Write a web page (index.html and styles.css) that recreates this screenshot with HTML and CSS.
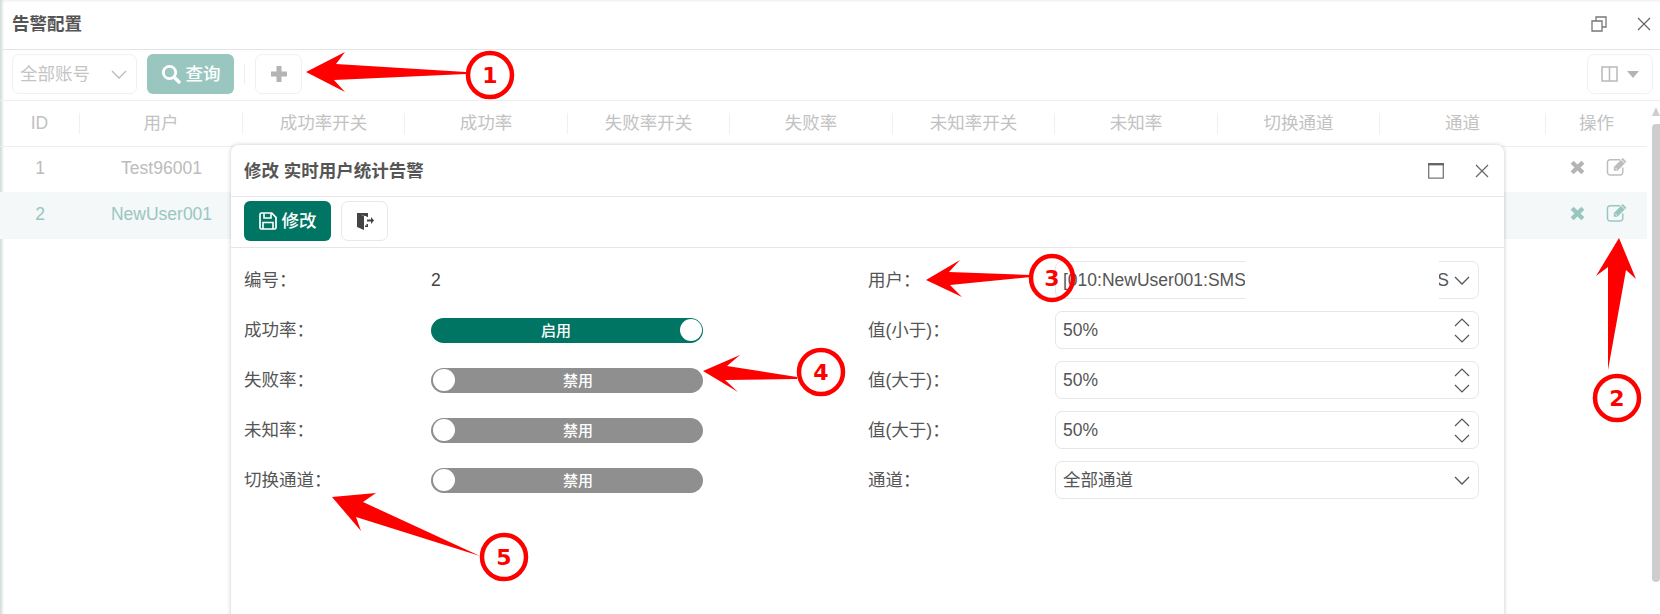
FILE: index.html
```html
<!DOCTYPE html>
<html lang="zh">
<head>
<meta charset="utf-8">
<title>告警配置</title>
<link rel="stylesheet" href="styles.css">
</head>
<body>
<div class="app">
  <header class="titlebar">
    <span class="page-title">告警配置</span>
    <span class="win-icons">
      <svg class="ico-restore" viewBox="0 0 16 16"><path d="M1 5h10v10H1zM5 5V1h10v10h-4" fill="none" stroke="#777" stroke-width="1.3"/></svg>
      <svg class="ico-close" viewBox="0 0 14 14"><path d="M1 1l12 12M13 1L1 13" fill="none" stroke="#666" stroke-width="1.2"/></svg>
    </span>
  </header>

  <div class="toolbar">
    <div class="tb-select"><span class="cjk-up">全部账号</span>
      <svg class="chev" viewBox="0 0 16 9"><path d="M1 1l7 7 7-7" fill="none" stroke="#bbb" stroke-width="1.3"/></svg>
    </div>
    <button class="btn-query">
      <svg class="ico-search" viewBox="0 0 20 20"><circle cx="8.5" cy="8.5" r="6.2" fill="none" stroke="#fff" stroke-width="2.8"/><path d="M13 13l5 5" stroke="#fff" stroke-width="3.4" stroke-linecap="round"/></svg>
      <span class="cjk-up">查询</span>
    </button>
    <span class="tb-divider"></span>
    <button class="btn-plain btn-add">
      <svg class="ico-plus" viewBox="0 0 16 16"><path d="M8 0v16M0 8h16" stroke="#b4b4b4" stroke-width="5"/></svg>
    </button>
    <button class="btn-plain btn-cols">
      <svg class="ico-cols" viewBox="0 0 17 16"><path d="M1 1h15v14H1zM8.500 1v14" fill="none" stroke="#b9b9b9" stroke-width="1.5"/></svg>
      <svg class="ico-caret" viewBox="0 0 12 7"><path d="M0 0h12L6 7z" fill="#b4b4b4"/></svg>
    </button>
  </div>

  <div class="content">
    <div class="table">
      <div class="tr thead">
        <div class="th">ID</div><div class="th">用户</div><div class="th">成功率开关</div><div class="th">成功率</div>
        <div class="th">失败率开关</div><div class="th">失败率</div><div class="th">未知率开关</div><div class="th">未知率</div>
        <div class="th">切换通道</div><div class="th">通道</div><div class="th th-last">操作</div>
      </div>
      <div class="tr row">
        <div class="td">1</div><div class="td">Test96001</div><div class="td"></div><div class="td"></div><div class="td"></div><div class="td"></div><div class="td"></div><div class="td"></div><div class="td"></div><div class="td"></div>
        <div class="td ops">
          <svg class="ico-x" viewBox="0 0 14 14"><path d="M2 2l10 10M12 2L2 12" stroke="#b4b4b4" stroke-width="4"/></svg>
          <svg class="ico-edit" viewBox="0 0 21 18"><path d="M15.500 10v4.500a2.500 2.500 0 0 1-2.500 2.500H3.500A2.500 2.500 0 0 1 1 14.500V5a2.500 2.500 0 0 1 2.500-2.500H13" fill="none" stroke="#bdbdbd" stroke-width="1.4"/><path d="M7 9.500L15.500 1l3.500 3.500L10.500 13H7z" fill="#bdbdbd"/><path d="M14 2.500l3.500 3.500M8.500 10.500l1.500 1.500" stroke="#fff" stroke-width="0.9"/></svg>
        </div>
      </div>
      <div class="tr row row-active">
        <div class="td">2</div><div class="td">NewUser001</div><div class="td"></div><div class="td"></div><div class="td"></div><div class="td"></div><div class="td"></div><div class="td"></div><div class="td"></div><div class="td"></div>
        <div class="td ops">
          <svg class="ico-x" viewBox="0 0 14 14"><path d="M2 2l10 10M12 2L2 12" stroke="#99c7c0" stroke-width="4"/></svg>
          <svg class="ico-edit" viewBox="0 0 21 18"><path d="M15.500 10v4.500a2.500 2.500 0 0 1-2.500 2.500H3.500A2.500 2.500 0 0 1 1 14.500V5a2.500 2.500 0 0 1 2.500-2.500H13" fill="none" stroke="#99c7c0" stroke-width="1.4"/><path d="M7 9.500L15.500 1l3.500 3.500L10.500 13H7z" fill="#99c7c0"/><path d="M14 2.500l3.500 3.500M8.500 10.500l1.500 1.500" stroke="#f4f8f8" stroke-width="0.9"/></svg>
        </div>
      </div>
    </div>
    <div class="scrollbar">
      <span class="sb-arrow"></span>
      <span class="sb-thumb"></span>
    </div>
  </div>
</div>

<section class="modal">
  <div class="modal-head">
    <span class="modal-title">修改 实时用户统计告警</span>
    <span class="modal-icons">
      <svg class="ico-max" viewBox="0 0 16 16"><path d="M.7 1.200h14.600v14H.7z" fill="none" stroke="#777" stroke-width="1.300"/><path d="M0 1.200h16" stroke="#666" stroke-width="2.400"/></svg>
      <svg class="ico-close" viewBox="0 0 14 14"><path d="M1 1l12 12M13 1L1 13" fill="none" stroke="#666" stroke-width="1.2"/></svg>
    </span>
  </div>
  <div class="modal-tools">
    <button class="btn-save">
      <svg class="ico-save" viewBox="0 0 18 18"><path d="M1 2.500A1.500 1.500 0 0 1 2.500 1h10.200L17 5.300v10.200a1.500 1.500 0 0 1-1.500 1.500h-13A1.500 1.500 0 0 1 1 15.500z" fill="none" stroke="#fff" stroke-width="1.700"/><path d="M5 1.500V6h7V1.500M4 17v-6.500h10V17" fill="none" stroke="#fff" stroke-width="1.600"/></svg>
      <span class="cjk-up">修改</span>
    </button>
    <button class="btn-plain btn-exit">
      <svg class="ico-exit" viewBox="0 0 18 18"><path d="M1 1h10v3H8.500L5.500 2.800V15l-4.500-2z" fill="#444"/><path d="M1 1l7 3v14l-7-3zM9 1h3v4H10.500V2.500H9zM10.500 12H12v3H9v-1.500h1.500z" fill="#444"/><path d="M11 7.500h4V5l3 3.500-3 3.500V9.500h-4z" fill="#444"/></svg>
    </button>
  </div>
  <div class="form">
    <label class="lbl">编号：</label><div class="val">2</div>
    <label class="lbl">用户：</label>
    <div class="field field-user">
      <span>[010:NewUser001:SMS</span><span class="field-end">S</span>
      <svg class="chev" viewBox="0 0 16 9"><path d="M1 1l7 7 7-7" fill="none" stroke="#555" stroke-width="1.3"/></svg>
      <span class="redact"></span>
    </div>

    <label class="lbl">成功率：</label><div class="toggle on"><span class="toggle-text">启用</span><span class="knob"></span></div>
    <label class="lbl">值(小于)：</label>
    <div class="field"><span>50%</span><span class="spin"><svg viewBox="0 0 16 9"><path d="M1 8l7-7 7 7" fill="none" stroke="#555" stroke-width="1.2"/></svg><svg viewBox="0 0 16 9"><path d="M1 1l7 7 7-7" fill="none" stroke="#555" stroke-width="1.2"/></svg></span></div>

    <label class="lbl">失败率：</label><div class="toggle"><span class="knob"></span><span class="toggle-text">禁用</span></div>
    <label class="lbl">值(大于)：</label>
    <div class="field"><span>50%</span><span class="spin"><svg viewBox="0 0 16 9"><path d="M1 8l7-7 7 7" fill="none" stroke="#555" stroke-width="1.2"/></svg><svg viewBox="0 0 16 9"><path d="M1 1l7 7 7-7" fill="none" stroke="#555" stroke-width="1.2"/></svg></span></div>

    <label class="lbl">未知率：</label><div class="toggle"><span class="knob"></span><span class="toggle-text">禁用</span></div>
    <label class="lbl">值(大于)：</label>
    <div class="field"><span>50%</span><span class="spin"><svg viewBox="0 0 16 9"><path d="M1 8l7-7 7 7" fill="none" stroke="#555" stroke-width="1.2"/></svg><svg viewBox="0 0 16 9"><path d="M1 1l7 7 7-7" fill="none" stroke="#555" stroke-width="1.2"/></svg></span></div>

    <label class="lbl">切换通道：</label><div class="toggle"><span class="knob"></span><span class="toggle-text">禁用</span></div>
    <label class="lbl">通道：</label>
    <div class="field"><span class="cjk-up">全部通道</span><svg class="chev" viewBox="0 0 16 9"><path d="M1 1l7 7 7-7" fill="none" stroke="#555" stroke-width="1.3"/></svg></div>
  </div>
</section>

<svg class="annotations" viewBox="0 0 1660 614">
  <polygon points="306,72 345,52 336,64 466,72 466,74 334,80 345,92"/>
  <circle class="ring" cx="490" cy="75" r="22"/><text class="num" x="490" y="83">1</text>

  <polygon points="1619,238 1636,279 1626,270 1608,370 1608,267 1596,276"/>
  <circle class="ring" cx="1617" cy="398" r="22"/><text class="num" x="1617" y="406">2</text>

  <polygon points="926,280 960,260 949,272 1031,275 1031,277 950,285 962,297"/>
  <ellipse class="ring-open" cx="1052" cy="278" rx="21" ry="22"/><text class="num" x="1052" y="286">3</text>

  <polygon points="703,371 740,355 727,366 797,377 797,379 725,380 738,392"/>
  <circle class="ring" cx="821" cy="372" r="22"/><text class="num" x="821" y="380">4</text>

  <polygon points="332,497 376,493 363,502 480,556 356,517 361,531"/>
  <circle class="ring" cx="504" cy="557" r="22"/><text class="num" x="504" y="565">5</text>
</svg>
</body>
</html>
```
FILE: styles.css
```css
* { box-sizing: border-box; }
html, body { margin: 0; height: 100%; overflow: hidden; background: #fff; }
body {
  position: relative;
  font-family: "Liberation Sans", "Noto Sans CJK SC", sans-serif;
  font-size: 17.5px;
  color: #555;
}
button { font: inherit; padding: 0; cursor: pointer; }
svg { display: block; }
.cjk-up { padding-bottom: 3px; }

.app {
  height: 614px;
  display: flex;
  flex-direction: column;
  box-shadow: inset 4px 0 3px -2px #cddad6, inset 0 3px 3px -2px #eeeeee;
}

.titlebar {
  height: 50px;
  flex: none;
  display: flex;
  align-items: center;
  justify-content: space-between;
  padding: 0 9px 4px 12px;
  border-bottom: 1px solid #e4e4e4;
}
.page-title { font-weight: 700; color: #555; }
.win-icons { display: flex; align-items: center; gap: 30px; padding-top: 2px; }
.ico-restore { width: 16px; height: 16px; }
.ico-close { width: 14px; height: 14px; }

.toolbar {
  height: 51px;
  flex: none;
  display: flex;
  align-items: center;
  padding: 0 7px 2px 12px;
  border-bottom: 1px solid #eeeeee;
}
.tb-select {
  width: 125px;
  height: 40px;
  border: 1px solid #f0f0f0;
  border-radius: 7px;
  display: flex;
  align-items: center;
  justify-content: space-between;
  padding: 0 9px 0 7px;
  color: #c4c4c4;
}
.chev { width: 16px; height: 9px; flex: none; }
.btn-query {
  margin-left: 10px;
  width: 87px;
  height: 40px;
  border: 0;
  border-radius: 6px;
  background: #99c7c0;
  color: #fff;
  font-weight: 500;
  display: flex;
  align-items: center;
  justify-content: center;
  gap: 5px;
}
.ico-search { width: 20px; height: 20px; }
.tb-divider { width: 1px; height: 20px; margin: 0 10px; background: #eeeeee; }
.btn-plain {
  height: 40px;
  border: 1px solid #f0f0f0;
  border-radius: 7px;
  background: #fff;
  display: flex;
  align-items: center;
  justify-content: center;
}
.btn-add { width: 47px; }
.ico-plus { width: 16px; height: 16px; }
.btn-cols { width: 66px; margin-left: auto; gap: 9px; }
.ico-cols { width: 17px; height: 16px; }
.ico-caret { width: 12px; height: 7px; }

.content { flex: 1; display: flex; min-height: 0; }
.table { width: 1647px; flex: none; }
.tr {
  display: grid;
  grid-template-columns: 80px 163px 162px 163px 162px 163px 162px 163px 162px 166px 101px;
  align-items: center;
}
.thead { height: 46px; border-bottom: 1px solid #eeeeee; color: #c2c2c2; }
.th { height: 21px; line-height: 21px; text-align: center; border-right: 1px solid #f0f0f0; }
.th-last { border-right: 0; }
.row { height: 45px; color: #bcbcbc; }
.row-active { height: 47px; background: #f4f8f8; color: #99c7c0; }
.td { text-align: center; padding-bottom: 2px; }
.ops { display: flex; align-items: center; padding-left: 24px; gap: 21px; margin-top: -5px; }
.ico-x { width: 15px; height: 15px; margin-top: 3px; }
.ico-edit { width: 23px; height: 19px; }

.scrollbar {
  width: 8px;
  margin-left: 5px;
  flex: none;
  display: flex;
  flex-direction: column;
  padding-top: 6px;
  height: 481px;
}
.sb-arrow {
  height: 0;
  width: 0;
  border-left: 4px solid transparent;
  border-right: 4px solid transparent;
  border-bottom: 9px solid #cfcfcf;
  margin-bottom: 8px;
}
.sb-thumb { flex: 1; background: #cdcdcd; border-radius: 4px 0 4px 4px; }

.modal {
  position: absolute;
  left: 231px;
  top: 145px;
  width: 1273px;
  height: 480px;
  background: #fff;
  border-radius: 7px 7px 0 0;
  box-shadow: 0 0 4px rgba(0, 0, 0, 0.22);
}
.modal-head {
  height: 52px;
  display: flex;
  align-items: center;
  justify-content: space-between;
  padding: 0 15px 2px 13px;
  border-bottom: 1px solid #e6e6e6;
}
.modal-title { font-weight: 700; color: #555; }
.modal-icons { display: flex; align-items: center; gap: 31px; padding-top: 2px; }
.ico-max { width: 16px; height: 16px; }
.modal-tools {
  height: 51px;
  display: flex;
  align-items: center;
  gap: 10px;
  padding: 0 0 2px 13px;
  border-bottom: 1px solid #e6e6e6;
}
.btn-save {
  width: 87px;
  height: 40px;
  border: 0;
  border-radius: 6px;
  background: #017563;
  color: #fff;
  font-weight: 500;
  display: flex;
  align-items: center;
  justify-content: center;
  gap: 5px;
}
.ico-save { width: 18px; height: 18px; }
.btn-exit { width: 47px; border-color: #e8e8e8; }
.ico-exit { width: 18px; height: 18px; }

.form {
  display: grid;
  grid-template-columns: 187px 437px 187px 424px;
  grid-auto-rows: 50px;
  align-items: center;
  padding: 7px 0 0 13px;
}
.lbl { color: #555; padding-bottom: 4px; }
.val { color: #444; }
.toggle {
  width: 272px;
  height: 25px;
  border-radius: 13px;
  background: #8f8f8f;
  color: #fff;
  font-size: 15px;
  font-weight: 500;
  display: flex;
  align-items: center;
  padding: 0 1.500px;
}
.toggle.on { background: #017563; }
.toggle-text { flex: 1; text-align: center; padding-bottom: 1px; }
.knob { width: 22px; height: 22px; border-radius: 50%; background: #fff; flex: none; }

.field {
  position: relative;
  width: 424px;
  height: 38px;
  border: 1px solid #e6e6e6;
  border-radius: 7px;
  display: flex;
  align-items: center;
  justify-content: space-between;
  padding: 0 8px 0 7px;
  color: #555;
}
.field-user span:first-child { flex: 1; }
.field-end { margin-right: 5px; }
.redact {
  position: absolute;
  left: 189px;
  top: -1px;
  bottom: -1px;
  width: 194px;
  background: #fff;
}
.spin { display: flex; flex-direction: column; gap: 7px; }
.spin svg { width: 16px; height: 9px; }

.annotations {
  position: absolute;
  left: 0;
  top: 0;
  width: 1660px;
  height: 614px;
  pointer-events: none;
}
.annotations polygon { fill: #f00; }
.ring { fill: #fff; stroke: #f00; stroke-width: 4.500; }
.ring-open { fill: none; stroke: #f00; stroke-width: 4.500; }
.num {
  fill: #f00;
  font-family: "DejaVu Sans", sans-serif;
  font-weight: 700;
  font-size: 22px;
  text-anchor: middle;
}
```
